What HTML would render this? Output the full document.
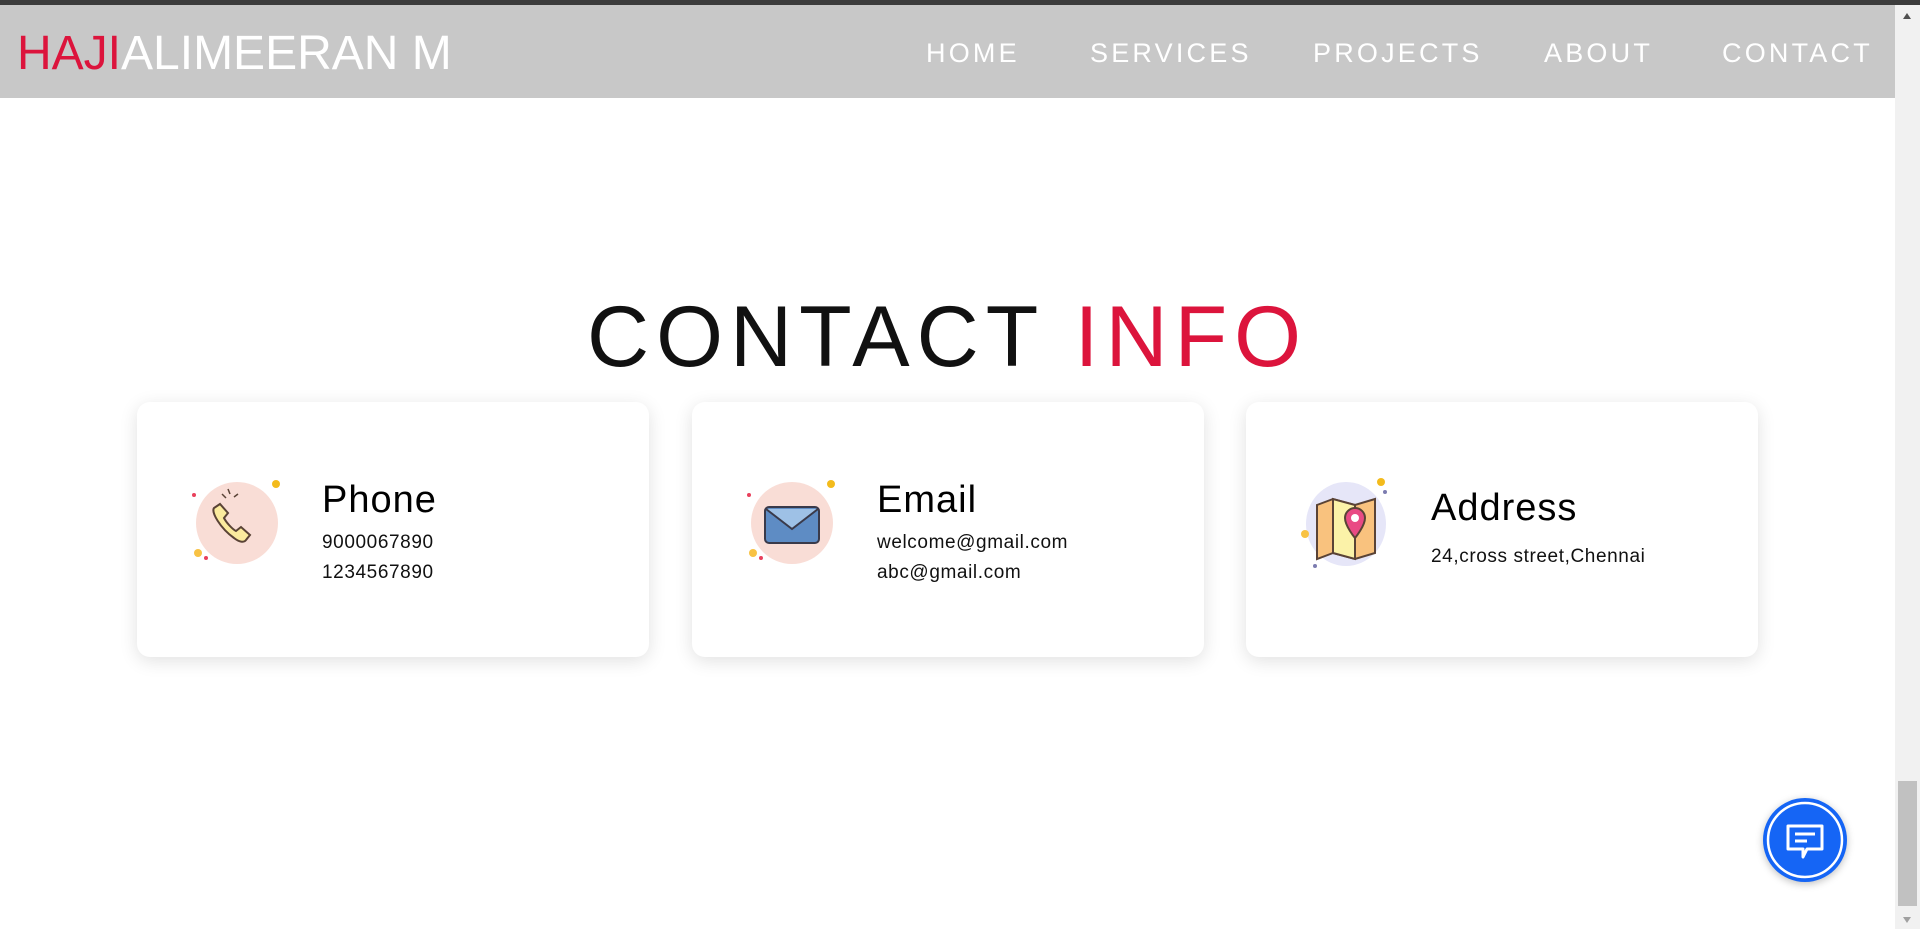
<!DOCTYPE html>
<html><head><meta charset="utf-8"><style>
*{margin:0;padding:0;box-sizing:border-box}
html,body{width:1920px;height:929px;overflow:hidden;background:#fff;font-family:"Liberation Sans",sans-serif}
.topbar{position:absolute;left:0;top:0;width:1920px;height:5px;background:#3c3c3c}
.header{position:absolute;left:0;top:5px;width:1895px;height:93px;background:#c8c8c8}
.logo{position:absolute;left:17px;top:21px;font-size:48px;color:#fff;letter-spacing:0;white-space:nowrap}
.logo span{color:#dc143c}
.nav{position:absolute;top:33px;font-size:27px;color:#fff;letter-spacing:3.2px;white-space:nowrap}
.sb{position:absolute;right:0;top:5px;width:25px;height:924px;background:#f1f1f1}
.thumb{position:absolute;right:3px;top:776px;width:19px;height:125px;background:#c1c1c1}
h1{position:absolute;left:0;width:1895px;top:288px;text-align:center;font-weight:normal;font-size:86px;letter-spacing:7px;color:#111}
h1 span{color:#dc143c}
.card{position:absolute;top:402px;width:512px;height:255px;background:#fff;border-radius:13px;box-shadow:0 4px 18px rgba(0,0,0,.12)}
.ic{position:absolute;left:55px;top:76px;width:90px;height:90px}
.t{position:absolute;left:185px;font-size:38px;letter-spacing:1px;color:#000}
.l{position:absolute;left:185px;font-size:19px;letter-spacing:0.6px;color:#111;line-height:30px}
.chat{position:absolute;left:1763px;top:798px;width:84px;height:84px;border-radius:50%;background:#1565f5;box-shadow:0 2px 8px rgba(0,0,0,.25)}
</style></head><body>
<div class="topbar"></div>
<div class="header">
<div class="logo"><span>HAJI</span>ALIMEERAN M</div>
<div class="nav" style="left:926px">HOME</div>
<div class="nav" style="left:1090px">SERVICES</div>
<div class="nav" style="left:1313px">PROJECTS</div>
<div class="nav" style="left:1544px">ABOUT</div>
<div class="nav" style="left:1722px">CONTACT</div>
</div>
<div class="sb"><div style="position:absolute;top:8px;left:8px;border:4px solid transparent;border-bottom:6px solid #505050;border-top:0"></div><div class="thumb"></div><div style="position:absolute;bottom:6px;left:8px;border:4px solid transparent;border-top:6px solid #a0a0a0;border-bottom:0"></div></div>
<h1>CONTACT <span>INFO</span></h1>

<div class="card" style="left:137px">
<svg class="ic" viewBox="0 0 90 90"><circle cx="45" cy="45" r="41" fill="#f9ddd6"/><circle cx="84" cy="6" r="4" fill="#f3bb1c"/><circle cx="6" cy="75" r="4" fill="#f8c244"/><circle cx="14" cy="80" r="2" fill="#e9405c"/><circle cx="2" cy="17" r="2" fill="#e9405c"/><path d="M22 30c-3 4 6 20 20 30 5 4 10 5 12 2l4-5-9-8-5 4c-4-2-10-9-12-13l4-5-8-9z" fill="#fbeb9e" stroke="#5a4336" stroke-width="2"/><path d="M38 16l-2-5M42 19l4-3M34 20l-4-4" stroke="#5a4336" stroke-width="1.5"/></svg>
<div class="t" style="top:77px">Phone</div>
<div class="l" style="top:126px">9000067890<br>1234567890</div>
</div>

<div class="card" style="left:692px">
<svg class="ic" viewBox="0 0 90 90"><circle cx="45" cy="45" r="41" fill="#f9ddd6"/><circle cx="84" cy="6" r="4" fill="#f3bb1c"/><circle cx="6" cy="75" r="4" fill="#f8c244"/><circle cx="14" cy="80" r="2" fill="#e9405c"/><circle cx="2" cy="17" r="2" fill="#e9405c"/><rect x="18" y="29" width="54" height="36" rx="4" fill="#5e8cc4" stroke="#3a3a4a" stroke-width="2"/><path d="M19 31l26 20 26-20" fill="#9ec1e6" stroke="#3a3a4a" stroke-width="2"/></svg>
<div class="t" style="top:77px">Email</div>
<div class="l" style="top:126px">welcome@gmail.com<br>abc@gmail.com</div>
</div>

<div class="card" style="left:1246px">
<svg class="ic" viewBox="0 0 90 90"><ellipse cx="45" cy="46" rx="40" ry="42" fill="#e6e6f8"/><circle cx="80" cy="4" r="4" fill="#f3bb1c"/><circle cx="4" cy="56" r="4" fill="#f8c244"/><circle cx="14" cy="88" r="2" fill="#7c7cb0"/><circle cx="84" cy="14" r="2" fill="#7c7cb0"/><path d="M16 27l16-6 22 6 20-6v54l-20 6-22-6-16 6z" fill="#f9c27e" stroke="#5a4336" stroke-width="2"/><path d="M32 21v54h0l22 6V27z" fill="#fbf2a8" stroke="#5a4336" stroke-width="2"/><path d="M54 30a10 10 0 0 0-10 10c0 8 10 20 10 20s10-12 10-20a10 10 0 0 0-10-10z" fill="#e94a84" stroke="#5a4336" stroke-width="2"/><circle cx="54" cy="40" r="4" fill="#fff"/></svg>
<div class="t" style="top:85px">Address</div>
<div class="l" style="top:140px">24,cross street,Chennai</div>
</div>

<div class="chat"><svg width="84" height="84" viewBox="0 0 84 84"><circle cx="42" cy="42" r="37" fill="none" stroke="#fff" stroke-width="2.5"/><path d="M25 28h34v23H44l-4 8v-8H25z" fill="none" stroke="#fff" stroke-width="3" stroke-linejoin="round"/><path d="M32 36h20M32 43h12" stroke="#fff" stroke-width="3"/></svg></div>
</body></html>
